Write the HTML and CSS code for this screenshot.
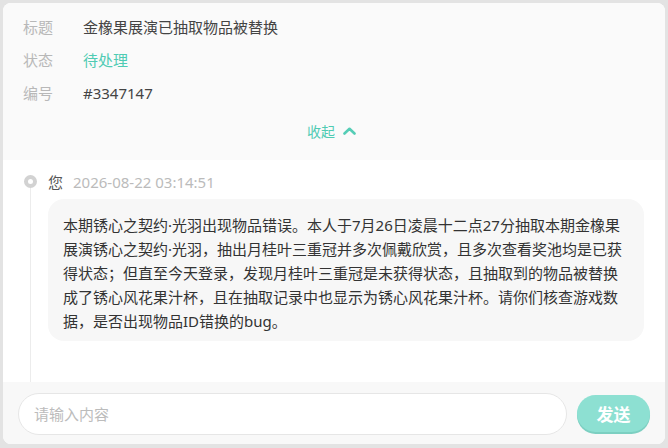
FILE: index.html
```html
<!DOCTYPE html>
<html lang="zh-CN">
<head>
<meta charset="utf-8">
<link rel="stylesheet" href="styles.css">
</head>
<body>
<div class="card">
  <section class="info">
    <div class="row"><span class="label">标题</span><span class="value">金橡果展演已抽取物品被替换</span></div>
    <div class="row"><span class="label">状态</span><span class="value status">待处理</span></div>
    <div class="row"><span class="label">编号</span><span class="value">#3347147</span></div>
    <div class="collapse">收起
      <svg class="chev" width="13" height="8" viewBox="0 0 13 8"><polyline points="1.5,6.5 6.5,1.8 11.5,6.5" fill="none" stroke="#55cdb6" stroke-width="2.6" stroke-linecap="round" stroke-linejoin="round"/></svg>
    </div>
  </section>
  <section class="thread">
    <div class="rail"><span class="dot"></span><span class="rail-line"></span></div>
    <div class="entry">
      <div class="meta"><span class="who">您</span><span class="time">2026-08-22 03:14:51</span></div>
      <div class="bubble">本期锈心之契约·光羽出现物品错误。本人于7月26日凌晨十二点27分抽取本期金橡果展演锈心之契约·光羽，抽出月桂叶三重冠并多次佩戴欣赏，且多次查看奖池均是已获得状态；但直至今天登录，发现月桂叶三重冠是未获得状态，且抽取到的物品被替换成了锈心风花果汁杯，且在抽取记录中也显示为锈心风花果汁杯。请你们核查游戏数据，是否出现物品ID错换的bug。</div>
    </div>
  </section>
  <footer class="composer">
    <div class="input">请输入内容</div>
    <button class="send">发送</button>
  </footer>
</div>
</body>
</html>
```

FILE: styles.css
```css
html, body {
  margin: 0;
  padding: 0;
}
body {
  background: #e3e3e3;
  font-family: "Noto Sans", "Noto Sans CJK SC", sans-serif;
  font-size: 15px;
  color: #444;
  width: 668px;
  height: 448px;
  overflow: hidden;
}
.card {
  margin: 3px 3px 0 3px;
  width: 662px;
  height: 441px;
  background: #fff;
  border-radius: 8px;
  overflow: hidden;
  display: flex;
  flex-direction: column;
}
.info {
  background: #fafafa;
  padding: 8px 20px 12px 20px;
}
.row {
  display: flex;
  line-height: 33px;
  height: 33px;
}
.label {
  width: 60px;
  color: #b8b8b8;
}
.value {
  color: #444;
}
.status {
  color: #4fcbb3;
}
.collapse {
  margin-top: 5px;
  line-height: 33px;
  display: flex;
  justify-content: center;
  align-items: center;
  gap: 8px;
  font-size: 14px;
  color: #4fcbb3;
  padding-right: 5px;
}
.chev {
  display: block;
  margin-top: -1px;
}
.thread {
  flex: 1;
  display: flex;
  padding: 0 21px 0 21px;
  background: #fff;
}
.rail {
  width: 13px;
  display: flex;
  flex-direction: column;
  align-items: center;
  padding-top: 15px;
}
.dot {
  width: 13px;
  height: 13px;
  box-sizing: border-box;
  border-radius: 50%;
  border: 4px solid #d2d2d2;
  background: #fff;
}
.rail-line {
  flex: 1;
  width: 1px;
  background: #ececec;
}
.entry {
  flex: 1;
  margin-left: 11px;
  padding-top: 11px;
}
.meta {
  line-height: 22px;
  display: flex;
  gap: 10px;
}
.who {
  color: #555;
}
.time {
  color: #bbb;
}
.bubble {
  margin-top: 6px;
  background: #f7f7f7;
  border-radius: 16px;
  padding: 14px 17px 8px 15px;
  line-height: 24px;
  color: #333;
}
.composer {
  height: 62px;
  background: #f8f8f8;
  display: flex;
  align-items: center;
  gap: 10px;
  padding: 0 15px;
}
.input {
  flex: 1;
  height: 42px;
  box-sizing: border-box;
  border: 1px solid #e6e6e6;
  border-radius: 21px;
  background: #fff;
  color: #bcbcbc;
  line-height: 40px;
  padding-left: 15px;
  margin-top: 2px;
}
.send {
  width: 73px;
  height: 37px;
  border: none;
  border-radius: 19px;
  background: #8de0d2;
  box-shadow: 0 2px 0 #7ccfc1;
  color: #fff;
  font-family: "Noto Sans CJK SC", sans-serif;
  font-weight: bold;
  font-size: 17px;
  padding: 0;
}
```
